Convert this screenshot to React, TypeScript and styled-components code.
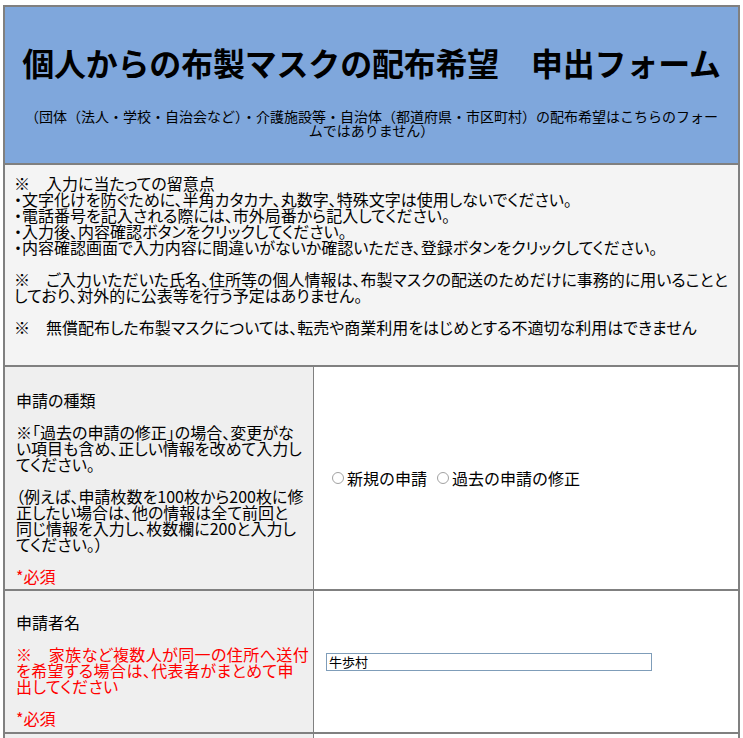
import React from 'react'
import styled, { createGlobalStyle } from 'styled-components'

const GlobalStyle = createGlobalStyle`
	body {
		margin: 0;
		background: #ffffff;
		font-family: "Noto Sans CJK JP", "Noto Sans", sans-serif;
		color: #000000;
	}
`

const Page = styled.div`
	padding: 5px 0 0 3px;
`

const FormTable = styled.div`
	width: 737px;
	box-sizing: border-box;
	border: 2px solid #808080;
	border-bottom: none;
`

const Header = styled.div`
	height: 158px;
	box-sizing: border-box;
	background-color: #7fa7dc;
	border-bottom: 2px solid #808080;
	padding-top: 35px;
	text-align: center;

	h1 {
		margin: 0;
		font-size: 32px;
		line-height: 40px;
		font-weight: 700;
		letter-spacing: -0.2px;
	}

	p {
		margin: 27px 0 0;
		font-size: 14px;
		line-height: 14px;
	}
`

const Notes = styled.div`
	height: 202px;
	box-sizing: border-box;
	background-color: #f4f4f4;
	border-bottom: 2px solid #808080;
	padding: 10px 9px;
	font-size: 16px;
	line-height: 16px;
	font-feature-settings: "palt";
	white-space: nowrap;

	p {
		margin: 0 0 16px;
	}
`

const Row = styled.div<{ $height: number }>`
	display: grid;
	grid-template-columns: 309px 424px;
	height: ${p => p.$height}px;
	box-sizing: border-box;
	border-bottom: 2px solid #808080;
`

const LabelCell = styled.div<{ $top: number }>`
	background-color: #efefef;
	border-right: 1px solid #808080;
	padding: ${p => p.$top}px 10px 0 11px;
	font-size: 16px;
	line-height: 16px;
	font-feature-settings: "palt";
	white-space: nowrap;
	overflow: hidden;

	p {
		margin: 0 0 16px;
	}
`

const Note = styled.p<{ $red?: boolean }>`
	color: ${p => (p.$red ? '#ff0000' : '#000000')};
	letter-spacing: ${p => (p.$red ? '0.4px' : '0')};
`

const Required = styled.p`
	color: #ff0000;
`

const ValueCell = styled.div`
	background-color: #ffffff;
	display: flex;
	align-items: center;
	padding-left: 12px;
`

const RadioGroup = styled.div`
	display: flex;
	align-items: center;
	gap: 10px;
	padding-left: 6px;
	font-size: 16px;
	line-height: 16px;
`

const RadioOption = styled.label`
	display: inline-flex;
	align-items: center;
	gap: 3px;
`

const Radio = styled.input`
	appearance: none;
	width: 12px;
	height: 12px;
	margin: 0;
	border: 1px solid #a2a2a2;
	border-radius: 50%;
	background: #ffffff;
	box-sizing: border-box;
`

const TextInput = styled.input`
	width: 326px;
	height: 18px;
	box-sizing: border-box;
	border: 1px solid #7f9db9;
	padding: 0 2px;
	font-family: "Noto Sans CJK JP", sans-serif;
	font-size: 13px;
	color: #000000;
	outline: none;
`

export default function App() {
	return <Page>
		<GlobalStyle />
		<FormTable>
			<Header>
				<h1>個人からの布製マスクの配布希望　申出フォーム</h1>
				<p>
					（団体（法人・学校・自治会など）・介護施設等・自治体（都道府県・市区町村）の配布希望はこちらのフォー<br />
					ムではありません）
				</p>
			</Header>

			<Notes>
				<p>
					※　入力に当たっての留意点<br />
					・文字化けを防ぐために、半角カタカナ、丸数字、特殊文字は使用しないでください。<br />
					・電話番号を記入される際には、市外局番から記入してください。<br />
					・入力後、内容確認ボタンをクリックしてください。<br />
					・内容確認画面で入力内容に間違いがないか確認いただき、登録ボタンをクリックしてください。
				</p>
				<p>
					※　ご入力いただいた氏名、住所等の個人情報は、布製マスクの配送のためだけに事務的に用いることと<br />
					しており、対外的に公表等を行う予定はありません。
				</p>
				<p>※　無償配布した布製マスクについては、転売や商業利用をはじめとする不適切な利用はできません</p>
			</Notes>

			<Row $height={224}>
				<LabelCell $top={25}>
					<p>申請の種類</p>
					<Note>
						※「過去の申請の修正」の場合、変更がな<br />
						い項目も含め、正しい情報を改めて入力し<br />
						てください。
					</Note>
					<Note>
						（例えば、申請枚数を100枚から200枚に修<br />
						正したい場合は、他の情報は全て前回と<br />
						同じ情報を入力し、枚数欄に200と入力し<br />
						てください。）
					</Note>
					<Required>*必須</Required>
				</LabelCell>
				<ValueCell>
					<RadioGroup>
						<RadioOption><Radio type="radio" name="kind" />新規の申請</RadioOption>
						<RadioOption><Radio type="radio" name="kind" />過去の申請の修正</RadioOption>
					</RadioGroup>
				</ValueCell>
			</Row>

			<Row $height={143}>
				<LabelCell $top={23}>
					<p>申請者名</p>
					<Note $red>
						※　家族など複数人が同一の住所へ送付<br />
						を希望する場合は、代表者がまとめて申<br />
						出してください
					</Note>
					<Required>*必須</Required>
				</LabelCell>
				<ValueCell>
					<TextInput type="text" defaultValue="牛歩村" />
				</ValueCell>
			</Row>

			<Row $height={143}>
				<LabelCell $top={23} />
				<ValueCell />
			</Row>
		</FormTable>
	</Page>
}
